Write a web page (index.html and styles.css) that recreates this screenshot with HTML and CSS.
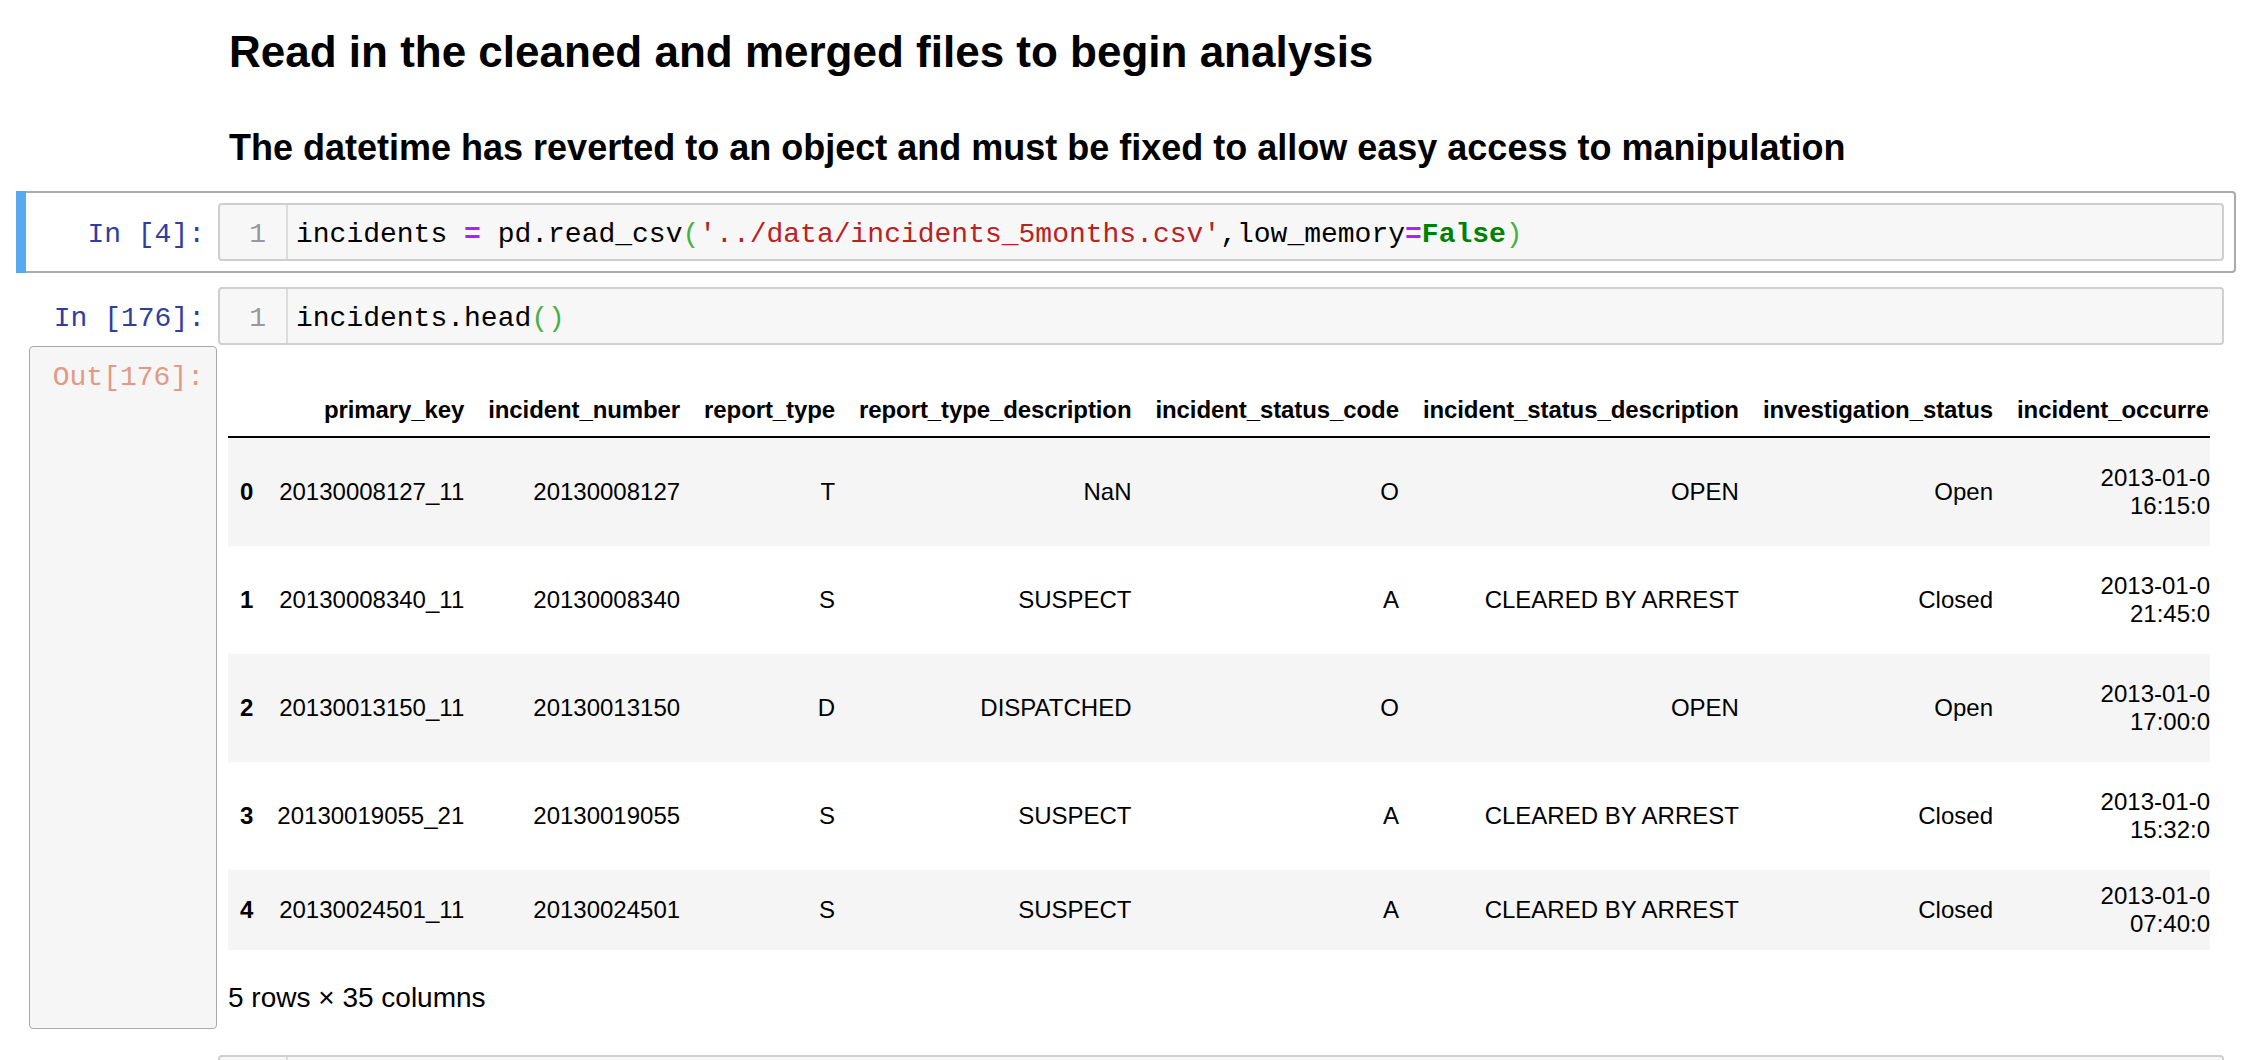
FILE: index.html
```html
<!DOCTYPE html>
<html lang="en">
<head>
<meta charset="utf-8">
<title>Notebook</title>
<link rel="stylesheet" href="styles.css">
</head>
<body>
<div class="notebook">
  <div class="cell text-cell">
    <div class="prompt"></div>
    <div class="text-render"><h2>Read in the cleaned and merged files to begin analysis</h2></div>
  </div>
  <div class="cell text-cell">
    <div class="prompt"></div>
    <div class="text-render"><h3>The datetime has reverted to an object and must be fixed to allow easy access to manipulation</h3></div>
  </div>

  <div class="cell code-cell selected">
    <div class="input">
      <div class="prompt in-prompt">In&nbsp;[4]:</div>
      <div class="input-area">
        <div class="gutter">1</div>
        <div class="code">incidents <span class="op">=</span> pd.read_csv<span class="br">(</span><span class="str">'../data/incidents_5months.csv'</span>,low_memory<span class="op">=</span><span class="kw">False</span><span class="br">)</span></div>
      </div>
    </div>
  </div>

  <div class="cell code-cell run">
    <div class="input">
      <div class="prompt in-prompt">In&nbsp;[176]:</div>
      <div class="input-area">
        <div class="gutter">1</div>
        <div class="code">incidents.head<span class="br">()</span></div>
      </div>
    </div>
    <div class="output">
      <div class="prompt out-prompt">Out[176]:</div>
      <div class="output-subarea">
        <table class="dataframe">
          <thead>
            <tr>
              <th></th>
              <th>primary_key</th>
              <th>incident_number</th>
              <th>report_type</th>
              <th>report_type_description</th>
              <th>incident_status_code</th>
              <th>incident_status_description</th>
              <th>investigation_status</th>
              <th>incident_occurred</th>
              <th>incident_reported</th>
              <th>zone</th>
            </tr>
          </thead>
          <tbody>
            <tr>
              <th>0</th>
              <td>20130008127_11</td>
              <td>20130008127</td>
              <td>T</td>
              <td>NaN</td>
              <td>O</td>
              <td>OPEN</td>
              <td>Open</td>
              <td>2013-01-01 16:15:00</td>
              <td>2013-01-01 16:20:00</td>
              <td>36.16 86.78 115</td>
            </tr>
            <tr>
              <th>1</th>
              <td>20130008340_11</td>
              <td>20130008340</td>
              <td>S</td>
              <td>SUSPECT</td>
              <td>A</td>
              <td>CLEARED BY ARREST</td>
              <td>Closed</td>
              <td>2013-01-01 21:45:00</td>
              <td>2013-01-01 22:05:00</td>
              <td>36.17 86.77 211</td>
            </tr>
            <tr>
              <th>2</th>
              <td>20130013150_11</td>
              <td>20130013150</td>
              <td>D</td>
              <td>DISPATCHED</td>
              <td>O</td>
              <td>OPEN</td>
              <td>Open</td>
              <td>2013-01-02 17:00:00</td>
              <td>2013-01-02 17:10:00</td>
              <td>36.12 86.71 523</td>
            </tr>
            <tr>
              <th>3</th>
              <td>20130019055_21</td>
              <td>20130019055</td>
              <td>S</td>
              <td>SUSPECT</td>
              <td>A</td>
              <td>CLEARED BY ARREST</td>
              <td>Closed</td>
              <td>2013-01-03 15:32:00</td>
              <td>2013-01-03 15:40:00</td>
              <td>36.19 86.80 317</td>
            </tr>
            <tr>
              <th>4</th>
              <td>20130024501_11</td>
              <td>20130024501</td>
              <td>S</td>
              <td>SUSPECT</td>
              <td>A</td>
              <td>CLEARED BY ARREST</td>
              <td>Closed</td>
              <td>2013-01-04 07:40:00</td>
              <td>2013-01-04 07:55:00</td>
              <td>36.15 86.79</td>
            </tr>
          </tbody>
        </table>
        <p class="df-shape">5 rows × 35 columns</p>
      </div>
    </div>
  </div>

  <div class="cell code-cell run">
    <div class="input">
      <div class="prompt in-prompt">In&nbsp;[177]:</div>
      <div class="input-area">
        <div class="gutter">1</div>
        <div class="code">incidents.info<span class="br">()</span></div>
      </div>
    </div>
  </div>
</div>
</body>
</html>
```

FILE: styles.css
```css
html, body {
  margin: 0;
  padding: 0;
  background: #ffffff;
  overflow: hidden;
}

body {
  font-family: "Liberation Sans", Arial, Helvetica, sans-serif;
  color: #000000;
}

.notebook {
  width: 2220px;
  margin-left: 16px;
}

/* ---------- cells ---------- */
.cell {
  position: relative;
  border: 2px solid transparent;
  border-radius: 4px;
  padding: 10px;
}

.cell.run {
  padding-top: 12px;
}

.cell.selected {
  border-color: #ababab;
}

.cell.selected::before {
  content: "";
  position: absolute;
  left: -2px;
  top: -2px;
  bottom: -2px;
  width: 10px;
  background: #5aa8ef;
}

.text-cell {
  display: flex;
}

.input,
.output {
  display: flex;
}

/* ---------- prompts ---------- */
.prompt {
  flex: 0 0 190px;
  width: 190px;
  box-sizing: border-box;
  padding: 15px 13px 0 0;
  text-align: right;
  font-family: "Liberation Mono", "Courier New", monospace;
  font-size: 28px;
  line-height: 34px;
  white-space: nowrap;
}

.in-prompt {
  color: #303f9f;
}

.out-prompt {
  flex: 0 0 188px;
  width: 188px;
  margin: 1px 1px 0 1px;
  padding: 14px 12px 0 0;
  color: #e09a85;
  background: #f6f6f6;
  border: 1px solid #a9a9a9;
  border-radius: 4px;
}

/* ---------- markdown ---------- */
.text-render {
  flex: 1;
  padding: 0 11px;
}

.text-render h2 {
  font-size: 44px;
  line-height: 52px;
  font-weight: bold;
  margin: 14px 0 0 0;
}

.text-render h3 {
  font-size: 36px;
  line-height: 44px;
  font-weight: bold;
  margin: 24px 0 9px 0;
}

/* ---------- code input ---------- */
.input-area {
  flex: 1;
  display: flex;
  background: #f7f7f7;
  border: 2px solid #cfcfcf;
  border-radius: 4px;
  font-family: "Liberation Mono", "Courier New", monospace;
  font-size: 28px;
  line-height: 34px;
}

.gutter {
  flex: 0 0 68px;
  width: 68px;
  box-sizing: border-box;
  border-right: 2px solid #dddddd;
  padding: 13px 20px 7px 0;
  text-align: right;
  color: #999999;
}

.code {
  padding: 13px 8px 7px 8px;
  white-space: pre;
  color: #000000;
}

.code .op {
  color: #aa22ff;
  font-weight: bold;
}

.code .str {
  color: #ba2121;
}

.code .kw {
  color: #008000;
  font-weight: bold;
}

.code .br {
  color: #44b044;
}

/* ---------- output ---------- */
.output-subarea {
  flex: 1;
  min-width: 0;
  overflow: hidden;
  padding: 11px 0 11px 10px;
  margin-right: 14px;
}

.dataframe {
  border-collapse: collapse;
  border-spacing: 0;
  border: none;
  font-size: 24px;
  line-height: 28px;
  color: #000000;
  margin-top: 28px;
}

.dataframe thead {
  border-bottom: 2px solid #000000;
  vertical-align: bottom;
}

.dataframe th,
.dataframe td {
  padding: 12px;
  text-align: right;
  vertical-align: middle;
  white-space: normal;
  border: none;
}

.dataframe thead th {
  vertical-align: bottom;
  font-weight: bold;
  letter-spacing: -0.1px;
}

.dataframe tbody th {
  font-weight: bold;
}

.dataframe tbody tr:nth-child(odd) {
  background: #f5f5f5;
}

.df-shape {
  font-size: 28px;
  line-height: 40px;
  margin: 28px 0 0 0;
}
```
